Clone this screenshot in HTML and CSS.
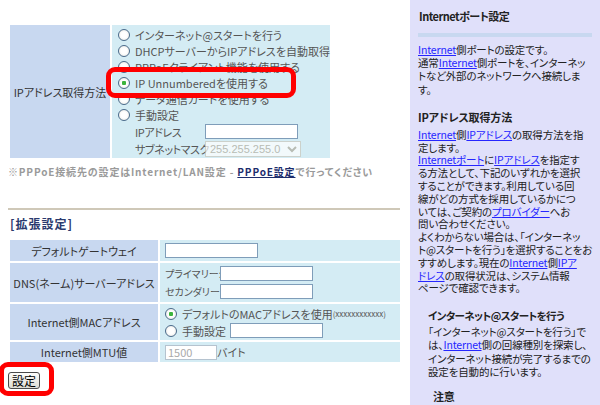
FILE: index.html
```html
<!DOCTYPE html>
<html lang="ja">
<head>
    <meta charset="UTF-8">
    <title>Internetポート設定</title>
    <link rel="stylesheet" href="styles.css">
</head>
<body>
<div class="page">
    <div class="main">
        <table class="form topForm">
            <tr>
                <td class="label">IPアドレス取得方法</td>
                <td class="value">
                    <label class="row"><input type="radio" name="ipmode">インターネット@スタートを行う</label>
                    <label class="row"><input type="radio" name="ipmode">DHCPサーバーからIPアドレスを自動取得</label>
                    <label class="row"><input type="radio" name="ipmode">PPPoEクライアント機能を使用する</label>
                    <label class="row"><input type="radio" name="ipmode" checked>IP Unnumberedを使用する</label>
                    <label class="row"><input type="radio" name="ipmode">データ通信カードを使用する</label>
                    <label class="row"><input type="radio" name="ipmode">手動設定</label>
                    <div class="sub"><span class="subName">IPアドレス</span><input type="text" class="box"></div>
                    <div class="sub"><span class="subName">サブネットマスク</span><select class="mask" disabled><option>255.255.255.0</option></select></div>
                </td>
            </tr>
        </table>
        <p class="note">※PPPoE接続先の設定はInternet/LAN設定 - <a href="JavaScript:;">PPPoE設定</a>で行ってください</p>
        <hr class="sep">
        <h3 class="extTitle">[拡張設定]</h3>
        <table class="form extForm">
            <tr class="r1">
                <td class="label">デフォルトゲートウェイ</td>
                <td class="value"><input type="text" class="box"></td>
            </tr>
            <tr class="r2">
                <td class="label">DNS(ネーム)サーバーアドレス</td>
                <td class="value">
                    <div class="dns"><span class="dnsName">プライマリー:</span><input type="text" class="box"></div>
                    <div class="dns"><span class="dnsName">セカンダリー:</span><input type="text" class="box"></div>
                </td>
            </tr>
            <tr class="r3">
                <td class="label">Internet側MACアドレス</td>
                <td class="value">
                    <label class="row"><input type="radio" name="mac" checked>デフォルトのMACアドレスを使用<small>(xxxxxxxxxxxx)</small></label>
                    <label class="row"><input type="radio" name="mac">手動設定<input type="text" class="box"></label>
                </td>
            </tr>
            <tr class="r4">
                <td class="label">Internet側MTU値</td>
                <td class="value"><input type="text" class="box mtu" value="1500" disabled>バイト</td>
            </tr>
        </table>
        <button class="submit">設定</button>

        <!-- 注釈の赤枠 -->
        <div class="mark markIp"></div>
        <div class="mark markBtn"></div>
    </div>

    <div class="side">
        <h4 class="sideTitle">Internetポート設定</h4>
        <div class="sideBar"></div>
        <p class="p1"><a href="JavaScript:;">Internet</a>側ポートの設定です。<br>
            通常<a href="JavaScript:;">Internet</a>側ポートを、インターネッ<br>
            トなど外部のネットワークへ接続しま<br>
            す。</p>

        <h4 class="sideHead h2">IPアドレス取得方法</h4>
        <p><a href="JavaScript:;">Internet</a>側<a href="JavaScript:;">IPアドレス</a>の取得方法を指<br>
            定します。<br>
            <a href="JavaScript:;">Internetポート</a>に<a href="JavaScript:;">IPアドレス</a>を指定す<br>
            る方法として、下記のいずれかを選択<br>
            することができます。利用している回<br>
            線がどの方式を採用しているかにつ<br>
            いては、ご契約の<a href="JavaScript:;">プロバイダー</a>へお<br>
            問い合わせください。<br>
            よくわからない場合は、「インターネッ<br>
            ト@スタートを行う」を選択することをお<br>
            すすめします。現在の<a href="JavaScript:;">Internet</a>側<a href="JavaScript:;">IPア<br>
            ドレス</a>の取得状況は、システム情報<br>
            ページで確認できます。</p>

        <div class="sideSub">
            <h4 class="sideHead h3">インターネット@スタートを行う</h4>
            <p class="p3">「インターネット@スタートを行う」で<br>
                は、<a href="JavaScript:;">Internet</a>側の回線種別を探索し、<br>
                インターネット接続が完了するまでの<br>
                設定を自動的に行います。</p>
            <h4 class="sideHead h4">注意</h4>
        </div>
    </div>
</div>
</body>
</html>
```

FILE: styles.css
```css
/* 全体 */
body{
    margin: 0;
    font-family: "Noto Sans CJK JP", "Liberation Sans", sans-serif;
    font-size: 11px;
    color: #333;
    font-feature-settings: "palt";
    background: #fff;
}
.page{
    display: flex;
    height: 405px;
    overflow: hidden;
}
/* 左側のフォーム部分 */
.main{
    position: relative;
    width: 405px;
    padding-left: 8px;
    margin-right: 8px;
    line-height: 16px;
}
.form{
    border-collapse: separate;
    border-spacing: 2px;
}
.form td{
    padding: 0;
    white-space: nowrap;
}
.form .label{
    background-color: #c8d8f0;
    text-align: center;
    color: #333;
}
.form .value{
    background-color: #d4ecf4;
    color: #555;
}
.topForm{
    margin-top: 23px;
}
.topForm .label{
    width: 100px;
}
.topForm .value{
    width: 193px;
    padding: 2px 0 1px 6px;
}
.row{
    display: flex;
    align-items: center;
    height: 16px;
}
.row input[type=radio]{
    appearance: none;
    width: 12px;
    height: 12px;
    margin: 0 5px 0 0;
    border: 1px solid #4a6a8a;
    border-radius: 50%;
    background: radial-gradient(circle, #fff 40%, #e4e4de 100%);
    flex: none;
}
.row input[type=radio]:checked{
    background: radial-gradient(circle, #3cb43c 0, #3cb43c 2px, #fff 2.5px, #fff 40%, #e4e4de 100%);
}
.sub{
    display: flex;
    align-items: center;
    height: 17px;
    padding-left: 17px;
}
.subName{
    width: 70px;
    flex: none;
    letter-spacing: -0.4px;
}
.box{
    width: 93px;
    height: 15px;
    box-sizing: border-box;
    border: 1px solid #7f9db9;
    background: #fff;
    padding: 0 2px;
    font: inherit;
    font-size: 11px;
}
.mask{
    width: 96px;
    height: 16px;
    box-sizing: border-box;
    border: 1px solid #c9c7ba;
    background: #fff;
    color: #aca899;
    font-family: "Liberation Sans", sans-serif;
    font-size: 11px;
    padding: 0;
}
.note{
    margin: 5px 0 0;
    font-size: 10px;
    line-height: 14px;
    font-weight: bold;
    color: #9a9a9a;
    letter-spacing: 0.85px;
    white-space: nowrap;
}
.note a{
    color: #1c2c6c;
}
.sep{
    margin: 29px 0 0;
    border: none;
    border-top: 2px solid #cfc8b8;
    width: 392px;
}
.extTitle{
    margin: 6px 0 0 2px;
    font-size: 12px;
    line-height: 16px;
    color: #2a3a6e;
    letter-spacing: 1px;
}
.extForm{
    margin-top: 6px;
    width: 394px;
}
.extForm .label{
    width: 148px;
}
.extForm .value{
    padding-left: 5px;
}
.extForm .r1 td{ height: 21px; }
.extForm .r2 td{ height: 39px; }
.extForm .r3 td{ height: 36px; }
.extForm .r4 td{ height: 20px; }
.dns{
    display: flex;
    align-items: center;
    height: 18px;
}
.dnsName{
    width: 55px;
    font-size: 10px;
}
.r3 .row{
    height: 17px;
}
.r3 small{
    font-size: 8px;
}
.r3 .box{
    margin-left: 4px;
}
.mtu{
    width: 52px;
    color: #aaa;
    border-color: #b5c3cf;
}
.submit{
    display: block;
    margin-top: 8px;
    padding: 0 3px;
    height: 17px;
    font: inherit;
    font-size: 12px;
    line-height: 14px;
    border: 1px solid #4a4a4a;
    border-radius: 3px;
    background: linear-gradient(#fdfdfb, #dcdcd4);
    color: #000;
}
/* 赤い注釈の枠 */
.mark{
    position: absolute;
    border: 5px solid #f00;
    border-radius: 9px;
    box-sizing: border-box;
}
.markIp{
    left: 106px;
    top: 67px;
    width: 190px;
    height: 31px;
}
.markBtn{
    left: -1px;
    top: 362px;
    width: 55px;
    height: 34px;
}
/* 右側の説明 */
.side{
    flex: 1;
    background-color: #e0e0fa;
    padding: 9px 8px 0 8px;
    color: #222;
    font-size: 10.5px;
    letter-spacing: -0.15px;
    line-height: 12.8px;
    white-space: nowrap;
}
.side p{
    margin: 0;
}
.side a{
    color: #2626ff;
}
.sideTitle{
    margin: 0 0 0 1px;
    font-size: 11px;
    line-height: 14px;
    letter-spacing: -0.5px;
}
.sideBar{
    height: 4px;
    background-color: #c8d8f0;
    margin: 10px 0 6px;
}
.p1{
    line-height: 13.2px;
}
.sideHead{
    font-size: 11px;
    line-height: 14px;
}
.h2{
    margin: 14px 0 5px;
}
.sideSub{
    padding-left: 10px;
}
.h3{
    margin: 14px 0 2px;
    font-size: 10.5px;
    letter-spacing: -0.6px;
}
.p3{
    line-height: 13.3px;
}
.h4{
    margin: 11px 0 0 5px;
}
```
